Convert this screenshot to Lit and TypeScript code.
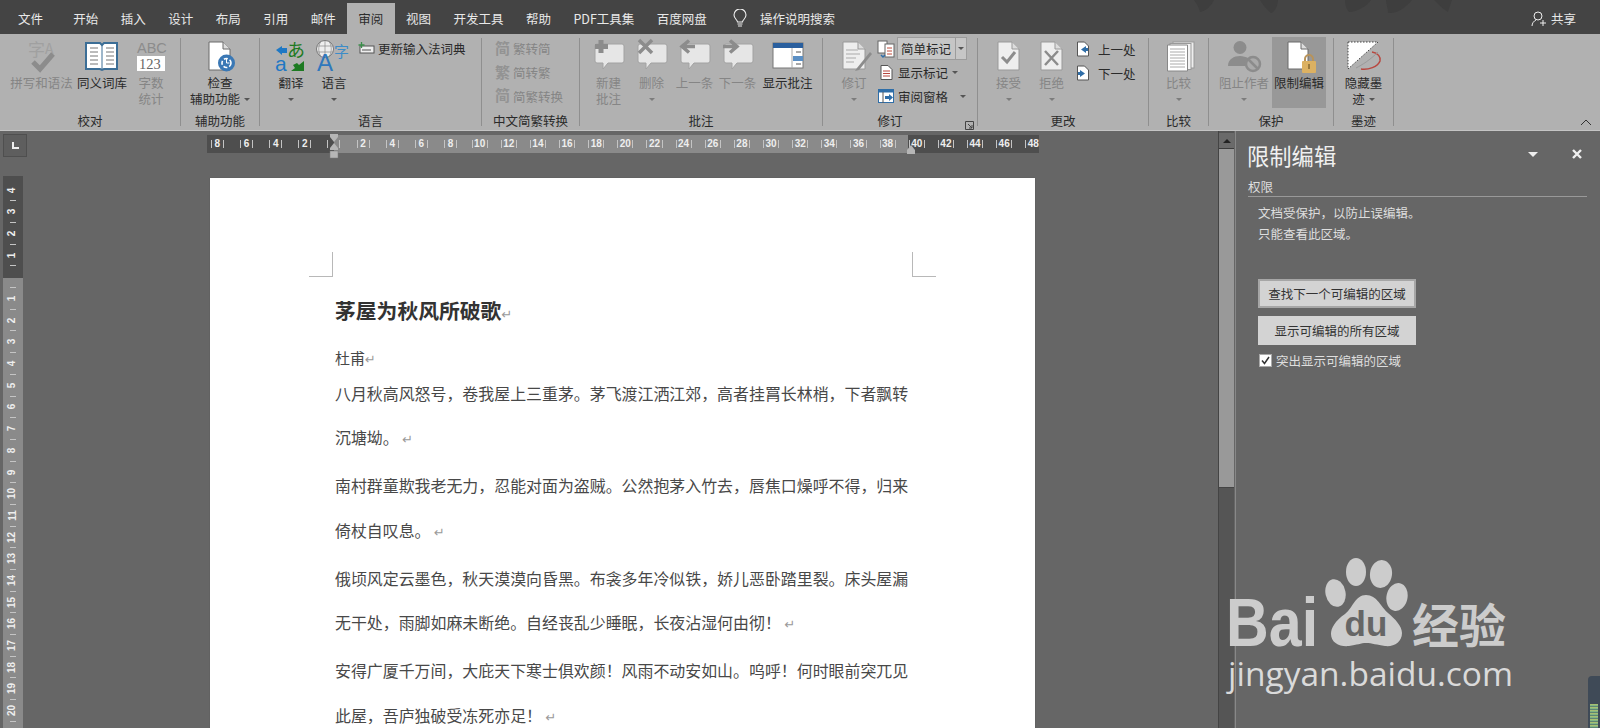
import { LitElement, html, css, svg } from "lit";
import { customElement } from "lit/decorators.js";

const GR = "#8c8c8c";
const BL = "#2f6ea8";

const icon = (c: any) => html`<svg class="ic" width="40" height="36" viewBox="0 0 40 36">${c}</svg>`;
const doc = (x: number, y: number, w: number, h: number, fill = "#fff", stroke = "#6a6a6a") =>
  svg`<path d="M${x} ${y}h${w - 7}l7 7v${h - 7}h${-w}z" fill=${fill} stroke=${stroke}/><path d="M${x + w - 7} ${y}v7h7" fill="#ddd" stroke=${stroke}/>`;
const bubble = (c: any) => icon(svg`
  <path d="M8 5h25a2 2 0 0 1 2 2v15a2 2 0 0 1-2 2H19l-5 6v-6H8a2 2 0 0 1-2-2V7a2 2 0 0 1 2-2z" fill="#e6e6e6" stroke="#a2a2a2"/>${c}`);

const I: Record<string, any> = {
  spell: icon(svg`<text x="6" y="17" font-size="17" fill="#a0a0a0">字</text><text x="23" y="15" font-size="14" fill="#a0a0a0">A</text>
    <path d="M11 23l7 7 13-15" fill="none" stroke=${GR} stroke-width="5"/>`),
  book: icon(svg`<path d="M4 4h14l2 2 2-2h13v26H22l-2 1-2-1H4z" fill="#fff" stroke="#3c6e96" stroke-width="2"/>
    <path d="M20 6v24" stroke="#3c6e96"/><path d="M8 9h8M8 13h8M8 17h8M8 21h8M8 25h8M24 9h8M24 13h8M24 17h8M24 21h8M24 25h8" stroke="#777"/>`),
  abc: icon(svg`<text x="6" y="14" font-size="14.5" fill=${GR} font-family="Liberation Sans">ABC</text><rect x="6" y="17" width="28" height="15" fill="#fff"/>
    <text x="8" y="30" font-size="14.5" fill="#666" font-family="Liberation Serif">123</text>`),
  access: icon(svg`${doc(9, 3, 21, 28)}<circle cx="26.5" cy="24" r="8.5" fill="#3a78b5"/>
    <circle cx="26.5" cy="24" r="4.5" fill="none" stroke="#fff" stroke-width="1.6" stroke-dasharray="4 2"/><path d="M26.5 20v4h3" stroke="#fff" fill="none"/>`),
  translate: icon(svg`<path d="M5 11l6-4v2h5v5h-5v2z" fill="#1f78c4"/><text x="16" y="18" font-size="18" fill="#1d7a22">あ</text>
    <text x="4" y="32" font-size="21" fill="#1f78c4" font-family="Liberation Sans">a</text><path d="M33 22v10H20l4-3-2-3 4-2 2 2z" fill="#1d7a22"/>`),
  lang: icon(svg`<circle cx="11" cy="10" r="8.5" fill="#eee" stroke="#777"/><path d="M3 7h16M3 13h16M11 2v16M7 2c-3 5-3 11 0 16M15 2c3 5 3 11 0 16" fill="none" stroke="#888" stroke-width=".7"/>
    <text x="3" y="32" font-size="24" fill="#2f78bd" font-family="Liberation Sans">A</text><text x="20" y="18" font-size="15" fill="#3b8cc9">字</text>`),
  plus: bubble(svg`<path d="M12 1v13M6 7.500h13" stroke=${GR} stroke-width="5"/>`),
  del: bubble(svg`<path d="M7 1l13 13M20 1L7 14" stroke=${GR} stroke-width="3.5"/>`),
  prev: bubble(svg`<path d="M20 7.500H9M14 1.500L7 7.500l7 6" fill="none" stroke=${GR} stroke-width="3.5"/>`),
  next: bubble(svg`<path d="M5 7.500h12M12 1.500l7 6-7 6" fill="none" stroke=${GR} stroke-width="3.500"/>`),
  show: icon(svg`<rect x="5" y="4" width="30" height="25" fill="#fff" stroke="#777"/><rect x="5" y="4" width="30" height="5" fill="#2a5f9e"/>
    <path d="M24 9v20" stroke="#aaa"/><path d="M28 13h5M28 25h5" stroke="#555"/><rect x="25" y="17" width="10" height="5" fill="#5b8fc4"/>`),
  track: icon(svg`${doc(9, 3, 22, 27, "#eee", "#999")}<path d="M12 11h12M12 15h14M12 19h10M12 23h8" stroke="#aaa"/><path d="M36 13L23 29l-2 3 4-1 13-16z" fill=${GR}/>`),
  accept: icon(svg`${doc(9, 3, 21, 28, "#eee", "#999")}<path d="M13 18l5 5 8-10" fill="none" stroke=${GR} stroke-width="3"/>`),
  reject: icon(svg`${doc(9, 3, 21, 28, "#eee", "#999")}<path d="M13 12l13 14M26 12L13 26" stroke=${GR} stroke-width="2.500"/>`),
  compare: icon(svg`<rect x="14" y="3" width="21" height="26" fill="#eee" stroke="#999"/><rect x="11" y="4.500" width="21" height="26" fill="#f3f3f3" stroke="#999"/>
    <path d="M8.500 6h20v26h-20z" fill="#fff" stroke="#888"/><path d="M11 10h15M11 13h15M11 16h15M11 19h15M11 22h15M11 25h15M11 28h15" stroke="#aaa"/>`),
  block: icon(svg`<circle cx="16" cy="8.500" r="6.500" fill=${GR}/><path d="M4 27c0-7 6-10 12-10 3 0 6 1 8 2l-3 8z" fill=${GR}/><circle cx="29" cy="25" r="7" fill="#aaa" stroke=${GR} stroke-width="2.500"/><path d="M24 20l10 10" stroke=${GR} stroke-width="2.500"/>`),
  restrict: icon(svg`${doc(9, 3, 20, 27)}<path d="M26 23v-3a4 4 0 0 1 8 0v3" fill="none" stroke="#b8935a" stroke-width="2"/><rect x="23" y="22" width="14" height="12" rx="1" fill="#dcb162"/><rect x="29" y="25" width="2" height="5" fill="#9a7a3e"/>`),
  ink: icon(svg`<path d="M4 3h30L4 30z" fill="#fff" stroke="#444" stroke-dasharray="1.500 1.500"/><path d="M28 13c6 1 9 5 8 9-2 6-12 9-19 8" fill="none" stroke="#b8473f" stroke-width="1.500"/><path d="M12 29c6-3 14-8 22-16" stroke="#999" fill="none"/>`),
};

const sm = (w: number, h: number, c: any) => html`<svg class="smi" width=${w} height=${h} viewBox="0 0 ${w} ${h}">${c}</svg>`;
const glyph = (t: string) => sm(16, 18, svg`<text x="0" y="14" font-size="15" font-weight="700" fill="#939393">${t}</text>`);
const navDoc = (d: string) => sm(14, 16, svg`<path d="M1.500 1h7l4 4v10h-11z" fill="#fff" stroke="#555"/><path d=${d} fill=${BL}/>`);

type Tall = { w: number; ic: any; l: string[]; off?: boolean; caret?: "line" | "inline"; on?: boolean };
const tall = (b: Tall) => html`<div class="tall ${b.off ? "off" : ""} ${b.on ? "on" : ""}" style="width:${b.w}px">
  ${b.ic}
  ${b.l.map((t, i) => html`<div class="ln">${t}${b.caret === "inline" && i === b.l.length - 1 ? html`<i class="car in"></i>` : ""}</div>`)}
  ${b.caret === "line" ? html`<div class="ln"><i class="car"></i></div>` : ""}
</div>`;

const TABS = ["开始", "插入", "设计", "布局", "引用", "邮件", "审阅", "视图", "开发工具", "帮助", "PDF工具集", "百度网盘"];
const P = [
  ["八月秋高风怒号，卷我屋上三重茅。茅飞渡江洒江郊，高者挂罥长林梢，下者飘转", "沉塘坳。"],
  ["南村群童欺我老无力，忍能对面为盗贼。公然抱茅入竹去，唇焦口燥呼不得，归来", "倚杖自叹息。"],
  ["俄顷风定云墨色，秋天漠漠向昏黑。布衾多年冷似铁，娇儿恶卧踏里裂。床头屋漏", "无干处，雨脚如麻未断绝。自经丧乱少睡眠，长夜沾湿何由彻！"],
  ["安得广厦千万间，大庇天下寒士俱欢颜！风雨不动安如山。呜呼！何时眼前突兀见", "此屋，吾庐独破受冻死亦足！"],
];
const HR = [-8, -6, -4, -2, 0];
for (let i = 2; i <= 48; i += 2) HR.push(i);
const VR = [4, 3, 2, 1, 0];
for (let i = 1; i <= 20; i++) VR.push(i);

@customElement("app-root")
export class AppRoot extends LitElement {
  static styles = css`
    :host { display: block; width: 1600px; height: 728px; position: relative; overflow: hidden; background: #666;
      font-family: "Noto Sans CJK SC", "Noto Sans", sans-serif; font-size: 12.5px; }
    * { box-sizing: border-box; }
    .title { height: 34px; background: #444; display: flex; color: #e8e8e8; position: relative; }
    .leaves { position: absolute; left: 1190px; top: 0; }
    .tab { padding: 3px 11.25px 0; line-height: 31px; white-space: nowrap; }
    .tab.file { padding-left: 18px; padding-right: 19px; }
    .tab.act { background: #b1b1b1; color: #2c2c2c; height: 31px; margin-top: 3px; padding-top: 0; }
    .search { display: flex; align-items: center; gap: 13px; padding: 3px 0 0 15px; }
    .share { margin-left: auto; display: flex; align-items: center; gap: 5px; padding: 3px 24px 0 0; }
    .ribbon { height: 97px; background: #b1b1b1; display: flex; padding-top: 3px; color: #2a2a2a; position: relative; border-bottom: 1px solid #c4c4c4; }
    .sep { width: 1px; height: 88px; margin-top: 1px; background: #8f8f8f; flex: none; }
    .grp { flex: none; display: flex; flex-direction: column; }
    .body { display: flex; height: 71px; }
    .glabel { margin-top: 5px; line-height: 16px; text-align: center; white-space: nowrap; }
    .tall { display: flex; flex-direction: column; align-items: center; flex: none; height: 71px; }
    .ic { flex: none; margin-top: 2px; height: 36px; overflow: visible; font-family: "Noto Sans CJK SC", sans-serif; }
    .ln { line-height: 16px; height: 16px; white-space: nowrap; display: flex; align-items: center; justify-content: center; }
    .off { color: #858585; }
    .on { background: #989898; }
    .car { display: inline-block; border: 3px solid transparent; border-top: 3.5px solid #555; border-bottom: 0; }
    .off .car { border-top-color: #7c7c7c; }
    .car.in { margin-left: 4px; }
    .car.far { margin-left: 12px; }
    .col { display: flex; flex-direction: column; }
    .row { height: 24px; display: flex; align-items: center; white-space: nowrap; }
    .smi { flex: none; display: block; overflow: visible; font-family: "Noto Sans CJK SC", sans-serif; }
    .r-dict { padding-left: 1px; gap: 4px; margin-top: -1px; }
    .r-cv { gap: 2px; color: #858585; height: 24.5px; }
    .markbox { width: 20px; display: flex; justify-content: center; flex: none; }
    .mark1 { height: 24px; margin-bottom: 1px; }
    .box { margin-left: 1px; width: 70px; height: 23px; background: #c6c6c6; border: 1px solid #9c9c9c; display: flex; align-items: center; padding-left: 3px; }
    .box span { width: 54px; }
    .box div { flex: 1; align-self: stretch; border-left: 1px solid #9c9c9c; display: flex; align-items: center; justify-content: center; }
    .markt { margin-left: 2px; }
    .r-nav { gap: 8px; padding-left: 3px; }
    .launch { position: absolute; left: 965px; top: 87px; }
    .collapse { margin: auto 8px 4px auto; display: block; }
    .work { height: 597px; display: flex; overflow: hidden; }
    .area { width: 1218px; flex: none; display: grid; grid-template-columns: 207px 1fr; grid-template-rows: 47px 550px; }
    .corner { width: 24px; height: 23px; margin: 3px 0 0 3px; background: #5e5e5e; border: 1px solid #4f4f4f; display: flex; align-items: center; justify-content: center; }
    .corner i { display: block; width: 7px; height: 7px; border-left: 2.5px solid #eee; border-bottom: 2.5px solid #eee; }
    .hr { width: 832px; height: 18px; margin-top: 4px; position: relative;
      background: linear-gradient(90deg, #4e4e4e 127px, #8a8a8a 127px, #8a8a8a 701px, #4e4e4e 701px); }
    .hr-in { display: flex; height: 18px; margin-left: -4.2px; width: 836.2px; overflow: hidden; }
    .hc { flex: 0 0 29.15px; display: flex; align-items: center; justify-content: center; color: #eee; font: 700 10px/18px "Liberation Sans", sans-serif; }
    .hc b { min-width: 8px; text-align: center; font-weight: 700; }
    .tk { width: 1px; height: 8px; background: #c4c4c4; flex: none; }
    .hc .tk { margin: 0 1.5px; }
    .ind { position: absolute; left: 122px; top: -1px; }
    .ind2 { position: absolute; left: 699px; top: 10px; }
    .vr { width: 20px; margin: -2px 0 0 3px; height: 552px; overflow: hidden; padding-top: 8.6px;
      background: linear-gradient(180deg, #4e4e4e 102px, #8a8a8a 102px); }
    .vc { height: 21.7px; display: flex; flex-direction: column; align-items: center; color: #eee; font: 700 10px "Liberation Sans", sans-serif; }
    .vc b { height: 10.85px; line-height: 10.85px; transform: rotate(-90deg); font-weight: 700; }
    .vc .t { height: 10.85px; display: flex; align-items: center; }
    .vc .t i { display: block; width: 6px; height: 1px; background: #c4c4c4; }
    .page { margin-left: 2.5px; width: 825px; background: #fff; overflow: hidden; color: #484848; box-shadow: 0 0 1px #555; }
    .crops { display: flex; justify-content: space-between; width: 627px; margin: 74px 0 0 99.5px; }
    .crops i { display: block; width: 24px; height: 25px; border-bottom: 1px solid #b8b8b8; }
    .crops i:first-child { border-right: 1px solid #b8b8b8; }
    .crops i:last-child { border-left: 1px solid #b8b8b8; }
    .text { margin-left: 125.5px; white-space: nowrap; }
    .h { font-size: 20.8px; font-weight: 700; line-height: 30px; margin-top: 18px; color: #333; }
    .au { font-size: 15px; line-height: 28px; margin-top: 19px; }
    .p { font-size: 15.93px; line-height: 44.4px; margin-bottom: 3.6px; }
    .p:first-of-type { margin-top: 1px; }
    .pm { color: #9a9a9a; font-size: 13px; line-height: 0; font-weight: 400; font-family: "DejaVu Sans", sans-serif; }
    .scroll { width: 16px; flex: none; background: #555; display: flex; flex-direction: column; border-left: 1px solid #444; }
    .up { margin-top: 2px; height: 16px; background: #6a6a6a; border-bottom: 1px solid #3c3c3c; display: flex; align-items: center; justify-content: center; }
    .up i { border: 4px solid transparent; border-bottom: 4px solid #222; border-top: 0; }
    .thumb { height: 339px; background: #999; border-bottom: 1px solid #444; }
    .pane { flex: 1; padding: 11px 13px 0 12px; border-left: 1px solid #888; margin-left: 1px; color: #dedede; min-width: 0; }
    .ph { display: flex; align-items: center; height: 30px; padding-right: 4px; }
    .pt { font-size: 22.3px; color: #f0f0f0; line-height: 30px; margin-top: -4px; margin-left: -1px; }
    .pdrop { margin-left: auto; border: 5px solid transparent; border-top: 5px solid #eee; border-bottom: 0; margin-top: -6px; }
    .px { margin: -6px 0 0 33px; display: block; }
    .perm { margin-top: 7px; height: 18px; line-height: 15px; border-bottom: 1px solid #999; }
    .msg { margin: 5px 0 0 10px; line-height: 21px; }
    .btn { width: 158px; height: 29px; margin-left: 10px; background: #d3d3d3; color: #333; display: flex; align-items: center; justify-content: center; white-space: nowrap; }
    .btn.f { margin-top: 35px; border: 2px solid #a6a6a6; }
    .btn.s { margin-top: 8px; }
    .chk { margin: 9px 0 0 11px; display: flex; align-items: center; gap: 4px; height: 13px; line-height: 13px; white-space: nowrap; }
    .wm { position: absolute; left: 1228px; top: 558px; color: #ccc; pointer-events: none; }
    .wm1 { display: flex; align-items: flex-end; height: 89px; }
    .bai { font: 700 68px/48px "Liberation Sans", sans-serif; width: 99px; margin-left: -2px; height: 48px; transform: scaleX(.87); transform-origin: left; white-space: nowrap; margin-bottom: 1px; }
    .paw { display: block; flex: none; }
    .jy { font-size: 47px; line-height: 47px; font-weight: 700; margin-left: 4px; white-space: nowrap; height: 47px; margin-bottom: 1px; }
    .url { font: 400 33.5px/40px "Open Sans", sans-serif; color: #dadada; margin-top: 6px; white-space: nowrap; }
    .meter { position: absolute; right: 0; top: 676px; width: 12px; height: 52px; border-radius: 4px 0 0 0; background: #3f4a57; display: flex; flex-direction: column; justify-content: flex-end; padding: 0 2px; }
    .meter i { display: block; height: 24px; background: repeating-linear-gradient(180deg, #b9c46a 0, #6fb08c 2px, #4b5a5a 3px); }
  `;

  render() {
    const grp = (w: number, label: string, body: any, pl = 0, lpad = 0) => html`
      <div class="grp" style="width:${w}px">
        <div class="body" style="padding-left:${pl}px">${body}</div>
        <div class="glabel" style="padding-right:${lpad}px">${label}</div>
      </div><div class="sep"></div>`;
    return html`
      <div class="title">
        <svg class="leaves" width="290" height="14" viewBox="0 0 290 14" fill="#3e3e3e">
          <path d="M4 0h20c-3 7-10 12-14 12C9 8 7 4 4 0zM70 0h18c0 6-4 13-7 13-4-3-9-9-11-13zM155 0h26c-4 6-14 12-22 12-3-3-4-8-4-12zM196 0h26c-6 7-14 14-24 13 0-5-2-9-2-13zM244 0h18l-4 12c-4-2-10-8-14-12z"/>
        </svg>
        <div class="tab file">文件</div>
        ${TABS.map((t) => html`<div class="tab ${t === "审阅" ? "act" : ""}">${t}</div>`)}
        <div class="search">
          <svg width="14" height="19" viewBox="0 0 14 19" fill="none" stroke="#eee" stroke-width="1.100"><path d="M4.500 13c0-2-3.500-3.500-3.500-7a6 6 0 0 1 12 0c0 3.500-3.500 5-3.500 7z"/><path d="M4.500 15h5M5 17h4"/></svg>
          <span>操作说明搜索</span>
        </div>
        <div class="share">
          <svg width="15" height="16" viewBox="0 0 15 16" fill="none" stroke="#eee"><circle cx="7" cy="5" r="4"/><path d="M1 15c0-3 2-5 4-6M9 12h6M12 9v6"/></svg>
          <span>共享</span>
        </div>
      </div>

      <div class="ribbon">
        ${grp(180, "校对", html`
          ${tall({ w: 63, ic: I.spell, l: ["拼写和语法"], off: true })}
          ${tall({ w: 58, ic: I.book, l: ["同义词库"] })}
          ${tall({ w: 40, ic: I.abc, l: ["字数", "统计"], off: true })}`, 10)}
        ${grp(78, "辅助功能", tall({ w: 78, ic: I.access, l: ["检查", "辅助功能"], caret: "inline" }))}
        ${grp(221, "语言", html`
          ${tall({ w: 40, ic: I.translate, l: ["翻译"], caret: "line" })}
          ${tall({ w: 46, ic: I.lang, l: ["语言"], caret: "line" })}
          <div class="col"><div class="row r-dict">
            ${sm(16, 12, svg`<rect x="2" y="4" width="14" height="7" fill="#eee" stroke="#555"/><path d="M4 8h9" stroke="#555"/><path d="M3.500 0v6M.500 3h6" stroke="#3a8f4a" stroke-width="1.300"/>`)}
            更新输入法词典</div></div>`, 11)}
        ${grp(97, "中文简繁转换", html`<div class="col">
          <div class="row r-cv">${glyph("简")}繁转简</div>
          <div class="row r-cv">${glyph("繁")}简转繁</div>
          <div class="row r-cv">${glyph("简")}简繁转换</div></div>`, 13)}
        ${grp(242, "批注", html`
          ${tall({ w: 43, ic: I.plus, l: ["新建", "批注"], off: true })}
          ${tall({ w: 43, ic: I.del, l: ["删除"], off: true, caret: "line" })}
          ${tall({ w: 43, ic: I.prev, l: ["上一条"], off: true })}
          ${tall({ w: 43, ic: I.next, l: ["下一条"], off: true })}
          ${tall({ w: 57, ic: I.show, l: ["显示批注"] })}`, 7)}
        ${grp(154, "修订", html`
          ${tall({ w: 44, ic: I.track, l: ["修订"], off: true, caret: "line" })}
          <div class="col">
            <div class="row mark1"><div class="markbox">${sm(18, 20, svg`<rect x="1" y="2" width="9" height="12" fill="#fff" stroke="#666"/><rect x="8" y="5" width="9" height="13" fill="#fff" stroke="#666"/><path d="M10 9h5M10 12h5M10 15h5" stroke="#c04a3a"/><path d="M4 16l2 2 2-2" stroke=${BL} fill="none" stroke-width="1.500"/>`)}</div>
              <div class="box"><span>简单标记</span><div><i class="car"></i></div></div></div>
            <div class="row"><div class="markbox">${sm(13, 15, svg`<path d="M1 .500h7l4 4v10H1z" fill="#fff" stroke="#555"/><path d="M3 6h7M3 8.500h7M3 11h7" stroke="#b8473f"/>`)}</div>
              <span class="markt">显示标记</span><i class="car in"></i></div>
            <div class="row"><div class="markbox">${sm(16, 14, svg`<rect x=".5" y=".5" width="15" height="13" fill="#fff" stroke=${BL}/><rect x=".5" y=".5" width="15" height="3" fill=${BL}/><path d="M5 3v11" stroke="#555"/><path d="M7 7h4V5l4 3.500-4 3.500v-2H7z" fill=${BL}/>`)}</div>
              <span class="markt">审阅窗格</span><i class="car far"></i></div>
          </div>`, 9, 20)}
        ${grp(170, "更改", html`
          ${tall({ w: 43, ic: I.accept, l: ["接受"], off: true, caret: "line" })}
          ${tall({ w: 43, ic: I.reject, l: ["拒绝"], off: true, caret: "line" })}
          <div class="col">
            <div class="row r-nav">${navDoc("M10 5v2h2v3h-2v2L5 8.500z")}上一处</div>
            <div class="row r-nav">${navDoc("M4 5v2H2v3h2v2l5-3.500z")}下一处</div>
          </div>`, 9)}
        ${grp(59, "比较", tall({ w: 59, ic: I.compare, l: ["比较"], off: true, caret: "line" }))}
        ${grp(124, "保护", html`
          ${tall({ w: 56, ic: I.block, l: ["阻止作者"], off: true, caret: "line" })}
          ${tall({ w: 54, ic: I.restrict, l: ["限制编辑"], on: true })}`, 7)}
        ${grp(59, "墨迹", tall({ w: 59, ic: I.ink, l: ["隐藏墨", "迹"], caret: "inline" }))}
        <svg class="launch" width="9" height="9" viewBox="0 0 9 9" fill="none" stroke="#444"><path d="M.5 8.500v-8h8v8zM3 3l4 4M7 4v3H4"/></svg>
        <svg class="collapse" width="12" height="7" viewBox="0 0 12 7" fill="none" stroke="#333"><path d="M1 6l5-5 5 5"/></svg>
      </div>

      <div class="work">
        <div class="area">
          <div class="corner"><i></i></div>
          <div class="hr">
            <div class="hr-in">${HR.map((n) => html`<div class="hc"><i class="tk"></i><b>${n === 0 ? "" : Math.abs(n)}</b><i class="tk"></i></div>`)}</div>
            <svg class="ind" width="10" height="25" viewBox="0 0 10 25" fill="#b6b6b6"><path d="M1 0h8v3L5 8 1 3zM5 9l4 5v2H1v-2z"/><rect x="1" y="17" width="8" height="7" stroke="#777" stroke-width=".5"/></svg>
            <svg class="ind2" width="10" height="9" viewBox="0 0 10 9" fill="#b6b6b6"><path d="M5 0l4 5v4H1V5z"/></svg>
          </div>
          <div class="vr">${VR.map((n) => html`<div class="vc"><b>${n === 0 ? "" : n}</b><div class="t"><i></i></div></div>`)}</div>
          <div class="page">
            <div class="crops"><i></i><i></i></div>
            <div class="text">
              <div class="h">茅屋为秋风所破歌<span class="pm">↵</span></div>
              <div class="au">杜甫<span class="pm">↵</span></div>
              ${P.map((p) => html`<div class="p">${p[0]}<br />${p[1]} <span class="pm">↵</span></div>`)}
            </div>
          </div>
        </div>
        <div class="scroll">
          <div class="up"><i></i></div>
          <div class="thumb"></div>
        </div>
        <div class="pane">
          <div class="ph">
            <span class="pt">限制编辑</span>
            <i class="pdrop"></i>
            <svg class="px" width="12" height="12" viewBox="0 0 12 12" stroke="#f0f0f0" stroke-width="2.400"><path d="M2 2l8 8M10 2l-8 8"/></svg>
          </div>
          <div class="perm">权限</div>
          <div class="msg">文档受保护，以防止误编辑。<br />只能查看此区域。</div>
          <div class="btn f">查找下一个可编辑的区域</div>
          <div class="btn s">显示可编辑的所有区域</div>
          <div class="chk">
            <svg width="13" height="13" viewBox="0 0 13 13"><rect x=".5" y=".5" width="12" height="12" fill="#fff" stroke="#aaa"/><path d="M3 6.500l2.500 3L10 3" fill="none" stroke="#333" stroke-width="1.500"/></svg>
            突出显示可编辑的区域
          </div>
        </div>
      </div>

      <div class="wm">
        <div class="wm1">
          <div class="bai">Bai</div>
          <svg class="paw" width="83" height="89" viewBox="0 0 83 89" fill="#ccc">
            <ellipse cx="10.500" cy="35" rx="10" ry="14" transform="rotate(-12 10.500 35)"/>
            <ellipse cx="31" cy="14" rx="10" ry="14"/>
            <ellipse cx="56" cy="16" rx="11" ry="14" transform="rotate(8 56 16)"/>
            <ellipse cx="72" cy="39" rx="10.500" ry="14" transform="rotate(12 72 39)"/>
            <path d="M41 37C30 37 28 50 20 56 10 63 6 70 6 76c0 9 9 13 18 12 8-1 12-3 17-3 6 0 11 2 19 3 9 1 17-4 17-13 0-7-7-14-14-20C56 49 52 37 41 37z"/>
            <text x="41" y="78" text-anchor="middle" font-family="Liberation Sans" font-weight="700" font-size="35" fill="#666">du</text>
          </svg>
          <div class="jy">经验</div>
        </div>
        <div class="url">jingyan.baidu.com</div>
      </div>
      <div class="meter"><i></i></div>
    `;
  }
}
